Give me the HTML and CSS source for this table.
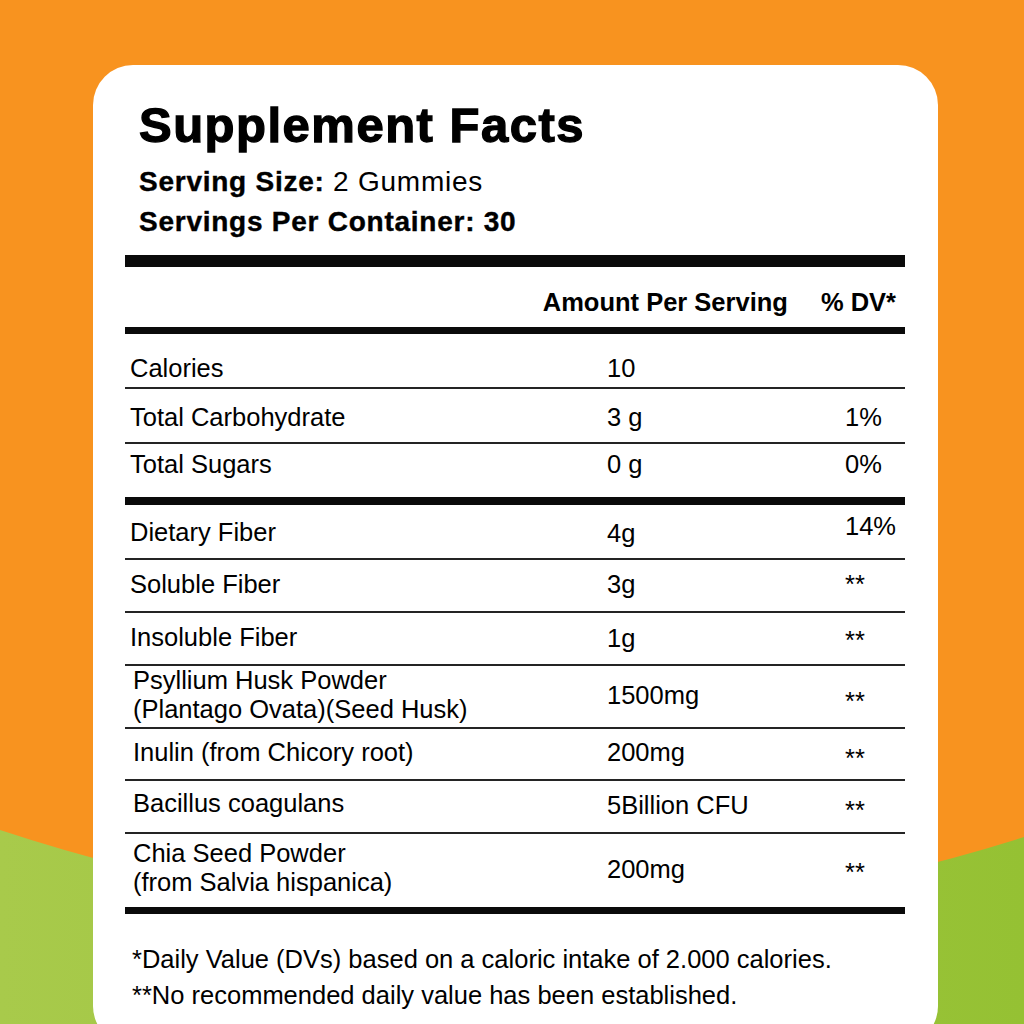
FILE: index.html
```html
<!DOCTYPE html>
<html lang="en">
<head>
<meta charset="utf-8">
<title>Supplement Facts</title>
<link rel="stylesheet" href="styles.css">
</head>
<body>
<svg class="bg-wave" viewBox="0 0 1024 1024" preserveAspectRatio="none" aria-hidden="true">
  <defs>
    <linearGradient id="g" x1="0" y1="0" x2="1" y2="0">
      <stop offset="0" stop-color="#a8ca4b"/>
      <stop offset="1" stop-color="#95c133"/>
    </linearGradient>
  </defs>
  <path d="M0 830 Q512 999 1024 837 L1024 1024 L0 1024 Z" fill="url(#g)"/>
</svg>
<main class="card">
  <header class="facts-head">
    <h1 class="title">Supplement Facts</h1>
    <p class="serving"><b>Serving Size:</b> 2 Gummies</p>
    <p class="serving"><b>Servings Per Container: 30</b></p>
  </header>
  <section class="facts">
    <div class="col-head"><span>Amount Per Serving</span><span>% DV*</span></div>
    <div class="row r-cal"><span class="lbl">Calories</span><span class="amt">10</span><span class="dv"></span></div>
    <div class="row r-carb"><span class="lbl">Total Carbohydrate</span><span class="amt">3 g</span><span class="dv">1%</span></div>
    <div class="row r-sug"><span class="lbl">Total Sugars</span><span class="amt">0 g</span><span class="dv">0%</span></div>
    <div class="row r-diet"><span class="lbl">Dietary Fiber</span><span class="amt">4g</span><span class="dv">14%</span></div>
    <div class="row r-sol"><span class="lbl">Soluble Fiber</span><span class="amt">3g</span><span class="dv">**</span></div>
    <div class="row r-ins"><span class="lbl">Insoluble Fiber</span><span class="amt">1g</span><span class="dv">**</span></div>
    <div class="row r-psy"><span class="lbl">Psyllium Husk Powder<br>(Plantago Ovata)(Seed Husk)</span><span class="amt">1500mg</span><span class="dv">**</span></div>
    <div class="row r-inu"><span class="lbl">Inulin (from Chicory root)</span><span class="amt">200mg</span><span class="dv">**</span></div>
    <div class="row r-bac"><span class="lbl">Bacillus coagulans</span><span class="amt">5Billion CFU</span><span class="dv">**</span></div>
    <div class="row r-chia"><span class="lbl">Chia Seed Powder<br>(from Salvia hispanica)</span><span class="amt">200mg</span><span class="dv">**</span></div>
  </section>
  <footer class="notes">
    <p>*Daily Value (DVs) based on a caloric intake of 2.000 calories.</p>
    <p>**No recommended daily value has been established.</p>
  </footer>
</main>
</body>
</html>
```
FILE: styles.css
```css
html, body {
  margin: 0;
  padding: 0;
}
body {
  position: relative;
  width: 1024px;
  height: 1024px;
  overflow: hidden;
  background: #f8931f;
  padding: 65px 0 0 93px;
  box-sizing: border-box;
  font-family: "Liberation Sans", Arial, sans-serif;
  color: #000;
}
.bg-wave {
  position: absolute;
  left: 0;
  top: 0;
  width: 1024px;
  height: 1024px;
  z-index: 0;
}
.card {
  position: relative;
  z-index: 1;
  width: 845px;
  height: 981px;
  box-sizing: border-box;
  background: #fff;
  border-radius: 40px;
  padding: 0 33px 0 32px;
}
.facts-head {
  padding: 31px 0 0 14px;
}
.title {
  margin: 0 0 8px;
  font-size: 49px;
  line-height: 58px;
  font-weight: 700;
  letter-spacing: 1.5px;
  -webkit-text-stroke: 1.3px #000;
}
.serving {
  margin: 0;
  font-size: 28px;
  line-height: 40px;
  letter-spacing: 0.75px;
}
.serving b {
  font-weight: 700;
  -webkit-text-stroke: 0.4px #000;
}
.facts {
  margin-top: 13px;
  border-top: 12px solid #0a0a0a;
  font-size: 25.5px;
  line-height: 30px;
}
.col-head {
  display: flex;
  justify-content: flex-end;
  gap: 33px;
  height: 40px;
  padding: 20px 9px 0 0;
  border-bottom: 7px solid #0a0a0a;
  font-weight: 700;
}
.row {
  --pt: 9px;
  --pv: var(--pt);
  --pd: var(--pt);
  display: grid;
  grid-template-columns: 482px 238px 60px;
  align-items: start;
  height: 51px;
  border-bottom: 2px solid #242424;
}
.lbl {
  padding: var(--pt) 0 0 5px;
}
.amt {
  padding-top: var(--pv);
}
.dv {
  padding-top: var(--pd);
}
.r-cal { --pt: 19px; height: 53px; }
.r-carb { --pt: 13px; height: 53px; }
.r-sug { --pt: 5px; height: 53px; border-bottom: 8px solid #0a0a0a; }
.r-diet { --pt: 12px; --pv: 13px; --pd: 6px; height: 53px; }
.r-sol { --pt: 9px; }
.r-ins { --pt: 9px; --pv: 10px; --pd: 12px; }
.r-psy { --pt: 0px; --pv: 14px; --pd: 20px; height: 61px; }
.r-psy .lbl { line-height: 29px; }
.r-inu { --pt: 8px; --pd: 14px; height: 50px; }
.r-bac { --pt: 7px; --pv: 9px; --pd: 14px; }
.r-chia { --pt: 5px; --pv: 20px; --pd: 23px; height: 73px; border-bottom: 7px solid #0a0a0a; }
.r-psy .lbl, .r-inu .lbl, .r-bac .lbl, .r-chia .lbl {
  padding-left: 8px;
}
.r-chia .lbl { line-height: 28.5px; }
.notes {
  margin-top: 27px;
  padding-left: 7px;
  font-size: 25.5px;
  line-height: 36px;
}
.notes p {
  margin: 0;
}
```
